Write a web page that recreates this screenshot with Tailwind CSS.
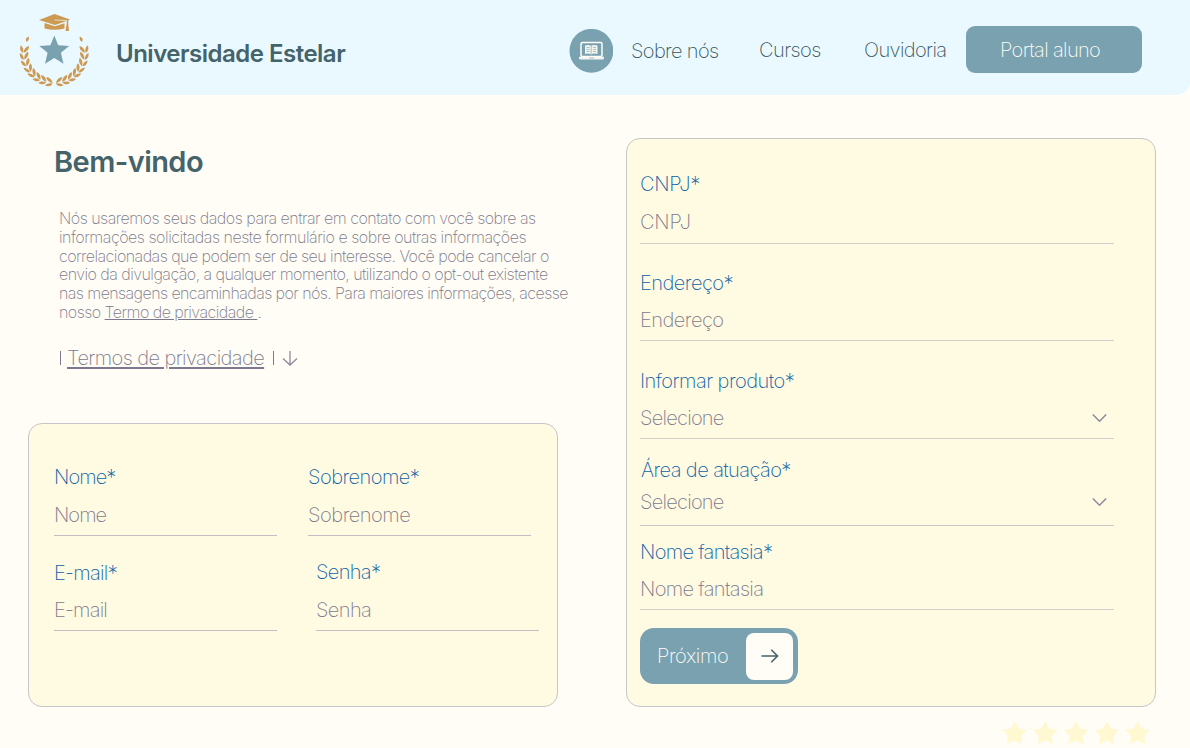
<!DOCTYPE html>
<html lang="pt-BR">
<head>
<meta charset="utf-8">
<title>Universidade Estelar</title>
<script src="https://cdn.jsdelivr.net/npm/@tailwindcss/browser@4"></script>
</head>
<body class="w-[1190px] h-[748px] overflow-hidden bg-[#fffdf5] font-['Inter','Liberation_Sans',sans-serif] font-extralight text-[20px] leading-6 text-[#7b798d] whitespace-nowrap">
<header class="flex h-[95px] items-start rounded-br-[14px] bg-[#eaf8ff] text-[#35545c]">
  <svg class="ml-4 mt-3 h-[77px] w-[76px] shrink-0" viewBox="16 12 76 77" fill="#cc9a52">
    <defs>
      <g id="pair">
        <path d="M57 84.5C55 80 52 79 49.500 79.500C50.500 82.500 53 84.500 57 84.500Z"/>
        <path d="M57 85C54 84.500 51 85.500 49.500 88C53 89 56 88 57 85Z"/>
      </g>
      <g id="branch">
        <use href="#pair" transform="rotate(8 54 53)"/>
        <use href="#pair" transform="rotate(20 54 53)"/>
        <use href="#pair" transform="rotate(32 54 53)"/>
        <use href="#pair" transform="rotate(44 54 53)"/>
        <use href="#pair" transform="rotate(56 54 53)"/>
        <use href="#pair" transform="rotate(69 54 53)"/>
        <use href="#pair" transform="rotate(82 54 53)"/>
        <use href="#pair" transform="rotate(95 54 53)"/>
        <path d="M25.500 42C24 39.500 25 37.500 27.800 36.500C28.300 39.500 27.500 41 25.500 42Z"/>
      </g>
    </defs>
    <g transform="translate(1.900 1.400) scale(.965)">
      <use href="#branch"/>
      <use href="#branch" transform="translate(108.500 0) scale(-1 1)"/>
    </g>
    <path d="M39 20L54.500 14L70 19.500L68.200 20.500V23.500H66.800V21L55 25Z"/>
    <path d="M44.500 23L55 26.300L64.500 23.200V28.500Q54.500 31 44.500 28.500Z"/>
    <path d="M66.800 23H68.200L69 31H65.500Z"/>
    <path d="M54.500 20L67 20.600" stroke="#eaf8ff" stroke-width=".7"/>
    <path fill="#7aa1b0" d="M54.300 35.500L58.200 45.300L69.200 46L60.900 52.800L63.500 63.800L54.300 58L45 63.800L47.600 52.800L39.300 46L50.400 45.300Z"/>
  </svg>
  <h1 class="ml-6 mt-[38px] h-8 w-[453px] text-[24px] leading-8 font-semibold tracking-[-0.5px] text-[#44636b]">Universidade Estelar</h1>
  <svg class="mt-[29px] size-11 shrink-0" viewBox="0 0 44 44">
    <circle cx="22.400" cy="21.800" r="21.900" fill="#7aa1b0"/>
    <rect x="12" y="13.500" width="21" height="14" rx="1.500" fill="#7aa1b0" stroke="#fffdf5" stroke-width="1.500"/>
    <path fill="#fffdf5" opacity=".9" d="M16 16.500Q19.500 15.300 22.200 16.700Q25 15.300 28.500 16.500V25Q25 24 22.200 25.500Q19.500 24 16 25ZM10 27.700H35V29Q35 30.500 33.500 30.500H11.500Q10 30.500 10 29Z"/>
    <path stroke="#7aa1b0" stroke-width=".6" fill="none" d="M22.200 16.700V25M17.500 18.500H20.700M17.500 20.500H20.700M17.500 22.500H20.700M24 18.500H27M24 20.500H27M24 22.500H27M20 29H25"/>
  </svg>
  <nav class="flex">
    <a class="ml-[18px] mt-[39px] w-[128px] tracking-[-0.63px]">Sobre nós</a>
    <a class="mt-[38px] w-[105px] tracking-[-0.55px]">Cursos</a>
    <a class="mt-[38px] w-[102px] tracking-[-0.62px]">Ouvidoria</a>
    <a class="mt-[26px] h-[47px] w-[176px] rounded-[9px] bg-[#7aa1b0] pl-[34px] pt-3 tracking-[-0.65px] text-[#fffdf5]">Portal aluno</a>
  </nav>
</header>
<main class="flex h-[612px] items-start">
  <section class="ml-7 w-[530px]">
    <h2 class="ml-[26px] mt-[49px] h-9 text-[29px] leading-9 font-semibold tracking-[-0.55px] text-[#44636b]">Bem-vindo</h2>
    <p class="ml-[31px] mt-[29px] text-[16px] leading-[18.800px] tracking-[-0.53px]"><span class="tracking-[-0.5px]">Nós usaremos seus dados para entrar em contato com você sobre as</span><br><span class="tracking-[-0.47px]">informações solicitadas neste formulário e sobre outras informações</span><br>correlacionadas que podem ser de seu interesse. Você pode cancelar o<br><span class="tracking-[-0.54px]">envio da divulgação, a qualquer momento, utilizando o opt-out existente</span><br><span class="tracking-[-0.57px]">nas mensagens encaminhadas por nós. Para maiores informações, acesse</span><br>nosso <a class="underline">Termo de privacidade </a>.</p>
    <div class="ml-[31px] mt-6 flex h-6">
      <span class="ml-px mt-[5px] mr-[6px] h-[14px] w-px bg-[#7b798d]"></span><a class="w-[206px] tracking-[-0.58px]"><span class="underline decoration-2 underline-offset-2">Termos de privacidade</span></a><span class="mt-[5px] mr-[8px] h-[14px] w-px bg-[#7b798d]"></span>
      <svg class="mt-1 size-4" viewBox="0 0 16 16" fill="none" stroke="#8c8a9c" stroke-width="1.300"><path d="M8 1V15M1 8.500L8 15L15 8.500"/></svg>
    </div>
    <div class="mt-[53px] h-[284px] rounded-[14px] border border-[#c6c5c8] bg-[#fffae2] pl-[25px] pt-[41px]">
      <div class="flex gap-[31px]">
        <div class="h-[71px] w-[223px] border-b border-[#c1bfc3]"><div class="tracking-[-0.9px] text-[#0761a6]">Nome*</div><div class="mt-[14px] tracking-[-0.95px]">Nome</div></div>
        <div class="h-[71px] w-[223px] border-b border-[#c1bfc3]"><div class="tracking-[-0.5px] text-[#0761a6]">Sobrenome*</div><div class="mt-[14px] tracking-[-0.45px]">Sobrenome</div></div>
      </div>
      <div class="mt-6 flex gap-[39px]">
        <div class="h-[71px] w-[223px] border-b border-[#c1bfc3]"><div class="mt-px tracking-[-0.7px] text-[#0761a6]">E-mail*</div><div class="mt-[13px] tracking-[-0.8px]">E-mail</div></div>
        <div class="h-[71px] w-[223px] border-b border-[#c1bfc3]"><div class="tracking-[-0.65px] text-[#0761a6]">Senha*</div><div class="mt-[14px] tracking-[-0.6px]">Senha</div></div>
      </div>
    </div>
  </section>
  <section class="ml-[68px] mt-[43px] h-[569px] w-[530px] rounded-[14px] border border-[#c6c5c8] bg-[#fffae2] pl-[13px] pt-[33px]">
    <div class="w-[474px]">
      <div class="h-[72px] border-b border-[#d2d0cd]"><div class="tracking-[-0.3px] text-[#0761a6]">CNPJ*</div><div class="mt-[14px] tracking-[-0.15px]">CNPJ</div></div>
      <div class="mt-[27px] h-[70px] border-b border-[#d2d0cd]"><div class="tracking-[-0.5px] text-[#0761a6]">Endereço*</div><div class="mt-[13px] tracking-[-0.5px]">Endereço</div></div>
      <div class="mt-7 h-[70px] border-b border-[#d2d0cd]"><div class="tracking-[-0.5px] text-[#0761a6]">Informar produto*</div>
        <div class="mt-[13px] flex items-center justify-between pr-[7px] tracking-[-0.75px]">Selecione<svg class="h-2 w-[15px]" viewBox="0 0 15 8" fill="none" stroke="#8c8a9c" stroke-width="1.500"><path d="M.8.500L7.500 7.200L14.200.500"/></svg></div></div>
      <div class="mt-[19px] h-[68px] border-b border-[#c9c8c6]"><div class="pl-px tracking-[-0.57px] text-[#0761a6]">Área de atuação*</div>
        <div class="mt-2 flex items-center justify-between pr-[7px] tracking-[-0.75px]">Selecione<svg class="h-2 w-[15px]" viewBox="0 0 15 8" fill="none" stroke="#8c8a9c" stroke-width="1.500"><path d="M.8.500L7.500 7.200L14.200.500"/></svg></div></div>
      <div class="mt-[14px] h-[70px] border-b border-[#d2d0cd]"><div class="tracking-[-0.68px] text-[#0761a6]">Nome fantasia*</div><div class="mt-[13px] tracking-[-0.65px]">Nome fantasia</div></div>
    </div>
    <button class="mt-[18px] flex h-14 w-[158px] items-center rounded-[14px] bg-[#7aa1b0] pl-[17px] text-[#fffdf5]">
      <span class="w-[89px] text-left tracking-[-0.4px]">Próximo</span>
      <span class="flex h-[47px] w-[47px] items-center justify-center rounded-[8px] bg-[#fffdf5]"><svg class="size-[18px]" viewBox="0 0 18 18" fill="none" stroke="#44636b" stroke-width="1.600"><path d="M.5 9H16.500M10.300 2.800L16.500 9L10.300 15.200"/></svg></span>
    </button>
  </section>
</main>
<footer class="ml-[1002px] mt-[14px] flex">
  <svg class="h-6 w-[148px]" viewBox="0 0 148 24" fill="#fff8d0"><defs><path id="star" d="M12.500 0L16.500 7.500L24.500 9L19 15L20 23L12.500 19.500L5 23L6 15L.3 9L8.500 7.500Z"/></defs><use href="#star"/><use href="#star" x="30.800"/><use href="#star" x="61.600"/><use href="#star" x="92.400"/><use href="#star" x="123.200"/></svg>
</footer>
</body>
</html>
